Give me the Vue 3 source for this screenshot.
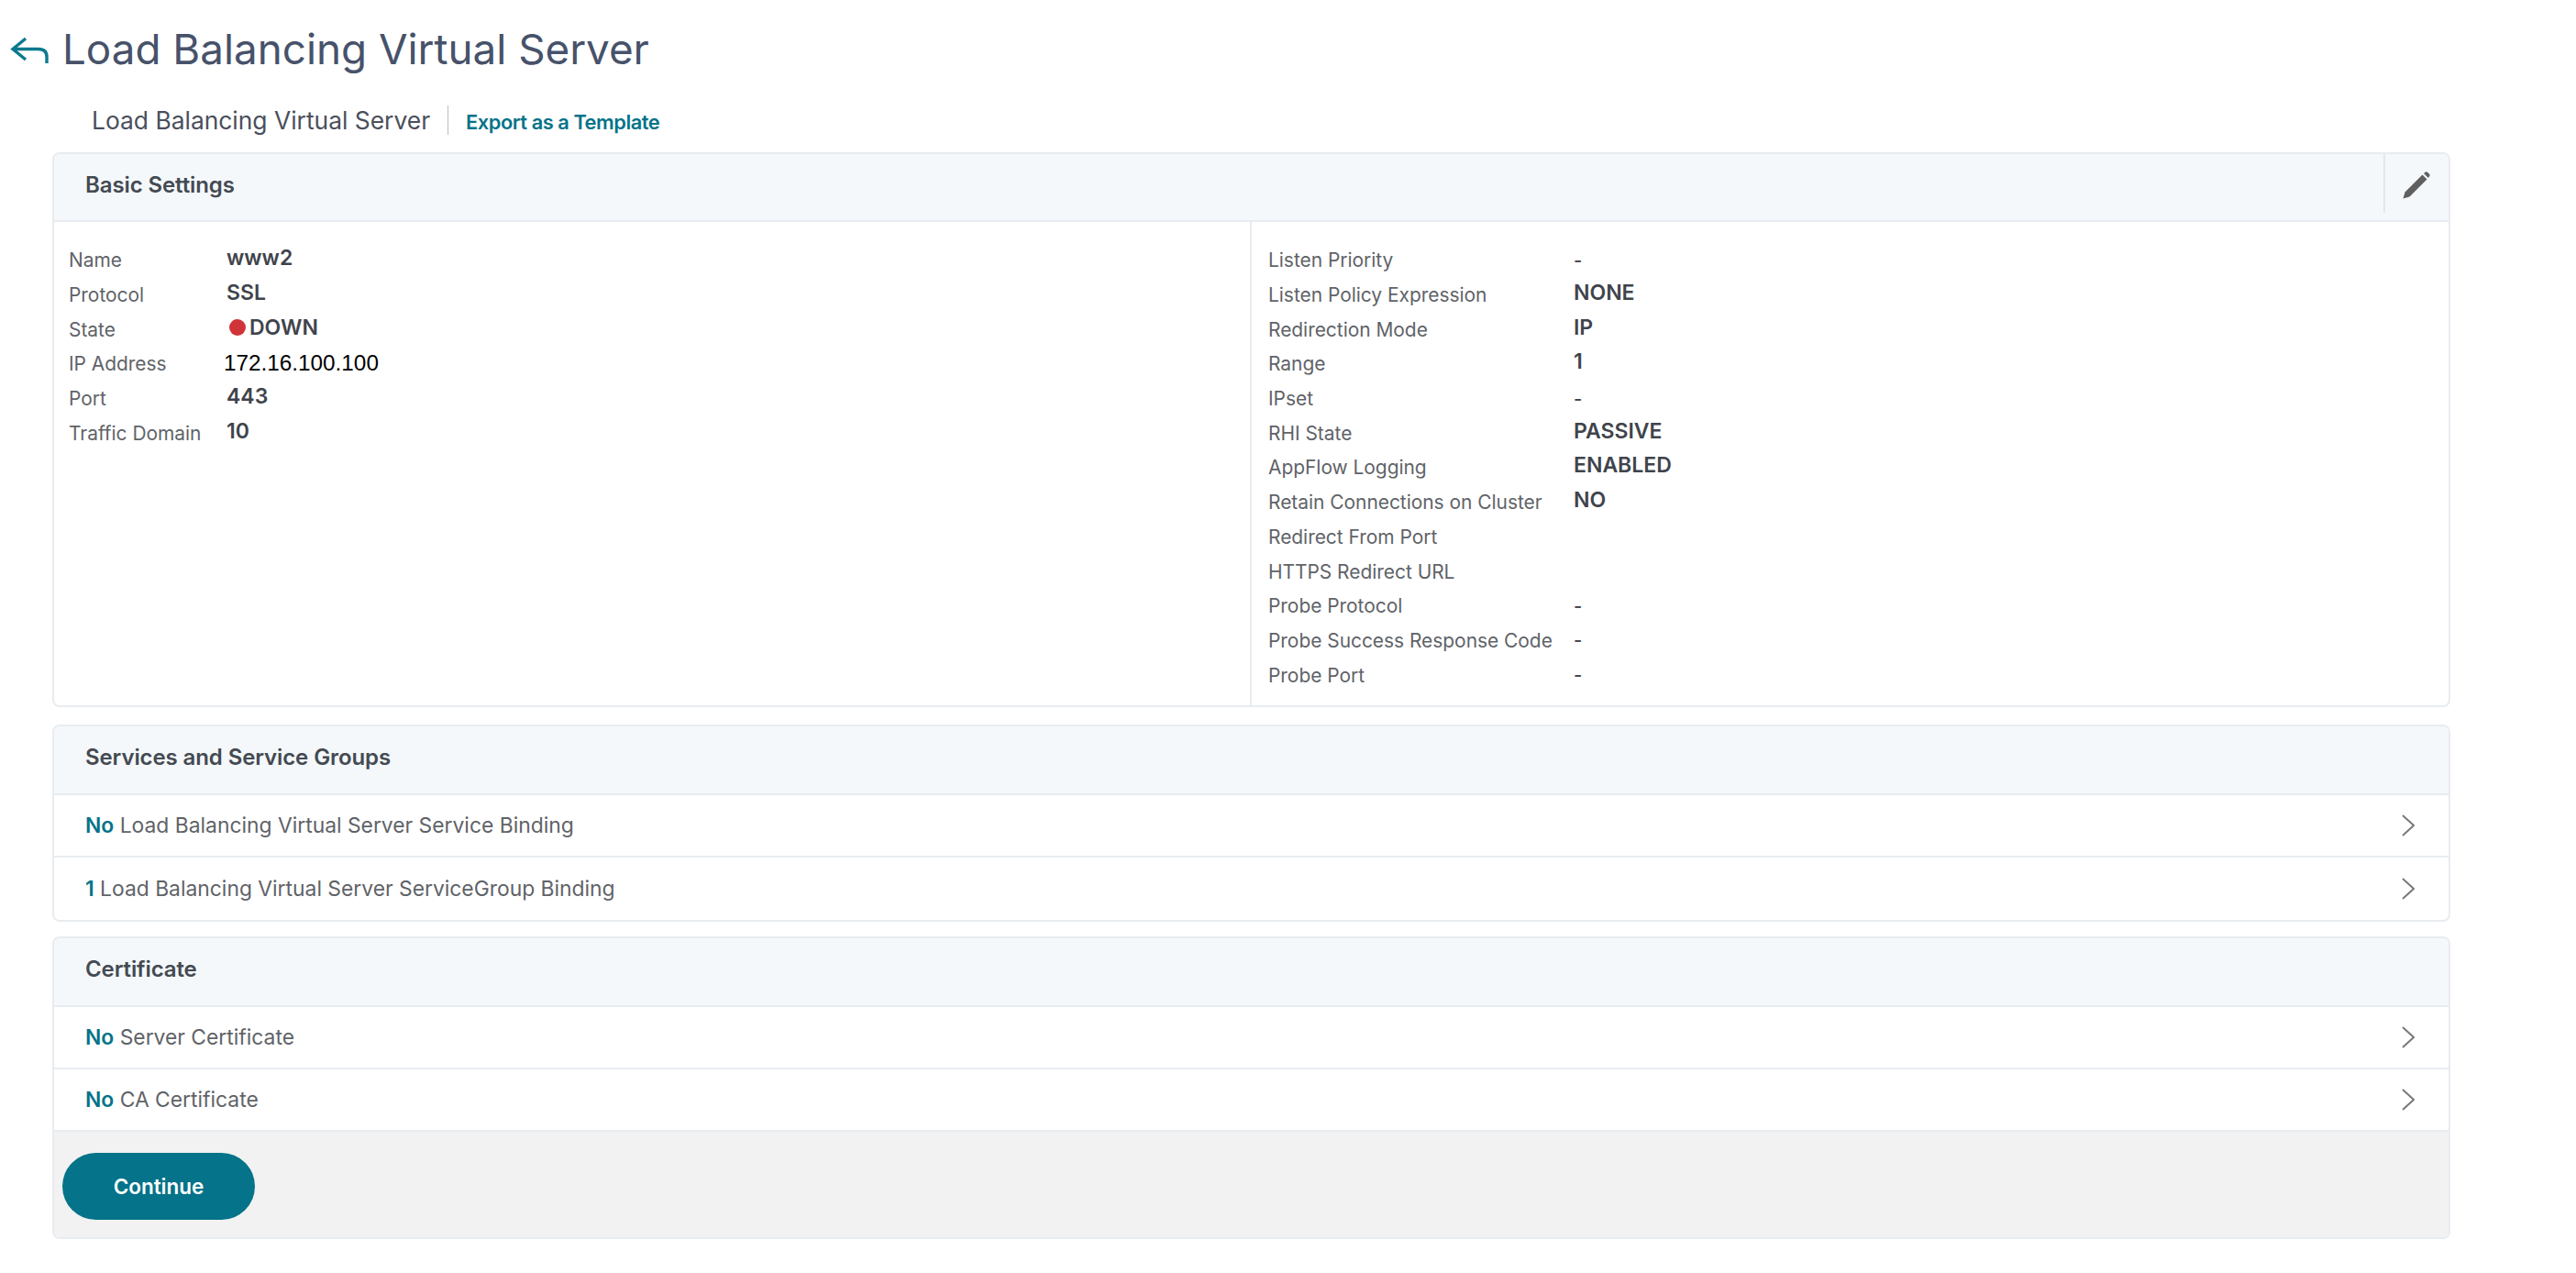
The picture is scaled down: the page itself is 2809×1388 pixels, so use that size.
<script setup>
const left = [
  { label: 'Name', value: 'www2' },
  { label: 'Protocol', value: 'SSL' },
  { label: 'State', value: 'DOWN', dot: true },
  { label: 'IP Address', value: '172.16.100.100', plain: true },
  { label: 'Port', value: '443' },
  { label: 'Traffic Domain', value: '10' }
]
const right = [
  { label: 'Listen Priority', value: '-' },
  { label: 'Listen Policy Expression', value: 'NONE' },
  { label: 'Redirection Mode', value: 'IP' },
  { label: 'Range', value: '1' },
  { label: 'IPset', value: '-' },
  { label: 'RHI State', value: 'PASSIVE' },
  { label: 'AppFlow Logging', value: 'ENABLED' },
  { label: 'Retain Connections on Cluster', value: 'NO' },
  { label: 'Redirect From Port', value: '' },
  { label: 'HTTPS Redirect URL', value: '' },
  { label: 'Probe Protocol', value: '-' },
  { label: 'Probe Success Response Code', value: '-' },
  { label: 'Probe Port', value: '-' }
]
const services = [
  { count: 'No', text: 'Load Balancing Virtual Server Service Binding' },
  { count: '1', text: 'Load Balancing Virtual Server ServiceGroup Binding' }
]
const certs = [
  { count: 'No', text: 'Server Certificate' },
  { count: 'No', text: 'CA Certificate' }
]
</script>

<template>
  <div class="page">
    <div class="title-row">
      <svg class="back" viewBox="0 0 42 30" width="42" height="30" fill="none" stroke="#0b7a8f" stroke-width="3.4">
        <path d="M17 2 L3 13.5 L17 25" />
        <path d="M3 13.5 H31 Q40 13.5 40 22 V29" />
      </svg>
      <h1 class="title">Load Balancing Virtual Server</h1>
    </div>
    <div class="crumb-row">
      <span class="crumb">Load Balancing Virtual Server</span>
      <span class="crumb-sep"></span>
      <a class="export">Export as a Template</a>
    </div>

    <section class="card card-basic">
      <header class="head head-basic">
        <span class="head-text">Basic Settings</span>
        <span class="edit">
          <svg viewBox="0 0 30 30" width="30" height="30">
            <path d="M0.5 29.5 L2.5 22.5 L21.5 3.5 L26.5 8.5 L7.5 27.5 Z" fill="#5f5f5f" />
            <path d="M23 2 L25 0.5 Q26 0 27 0.7 L29.3 3 Q30 4 29.3 5 L28 7 Z" fill="#5f5f5f" />
          </svg>
        </span>
      </header>
      <div class="basic">
        <div class="col col-left">
          <div v-for="r in left" :key="r.label" class="kv kv-left">
            <span class="key">{{ r.label }}</span>
            <span class="val" :class="{ plain: r.plain, state: r.dot }">
              <i v-if="r.dot" class="dot"></i>{{ r.value }}
            </span>
          </div>
        </div>
        <div class="col col-right">
          <div v-for="r in right" :key="r.label" class="kv kv-right">
            <span class="key">{{ r.label }}</span>
            <span class="val" :class="{ dash: r.value === '-' }">{{ r.value }}</span>
          </div>
        </div>
      </div>
    </section>

    <section class="card card-services">
      <header class="head"><span class="head-text">Services and Service Groups</span></header>
      <div v-for="r in services" :key="r.text" class="row">
        <span class="row-text"><b class="count">{{ r.count }}</b> {{ r.text }}</span>
        <svg class="chev" viewBox="0 0 14 24" width="14" height="24" fill="none" stroke="#77797c" stroke-width="2"><path d="M1 1 L13 12 L1 23" /></svg>
      </div>
    </section>

    <section class="card last">
      <header class="head"><span class="head-text">Certificate</span></header>
      <div v-for="r in certs" :key="r.text" class="row">
        <span class="row-text"><b class="count">{{ r.count }}</b> {{ r.text }}</span>
        <svg class="chev" viewBox="0 0 14 24" width="14" height="24" fill="none" stroke="#77797c" stroke-width="2"><path d="M1 1 L13 12 L1 23" /></svg>
      </div>
      <footer class="foot">
        <button class="continue">Continue</button>
      </footer>
    </section>
  </div>
</template>

<style>
html, body { margin: 0; background: #fff; }
</style>

<style scoped>
.page {
  width: 2809px;
  height: 1388px;
  box-sizing: border-box;
  overflow: hidden;
  font-family: Inter, "Liberation Sans", sans-serif;
  background: #fff;
}
.title-row {
  height: 106px;
  display: flex;
  align-items: center;
  padding-left: 11px;
  gap: 15px;
}
.back { flex: none; margin-top: 4px; }
.title {
  margin: 0;
  font-size: 45.75px;
  font-weight: 400;
  color: #47526a;
  white-space: nowrap;
}
.crumb-row {
  height: 50px;
  margin-bottom: 10px;
  padding-left: 100px;
  display: flex;
  align-items: center;
}
.crumb { font-size: 26.4px; color: #4a4f5c; white-space: nowrap; }
.crumb-sep { width: 1px; height: 32px; background: #b9bdc2; margin: 0 19px; }
.export { font-size: 21.8px; font-weight: 600; letter-spacing: -0.45px; color: #057389; white-space: nowrap; margin-top: 3px; }
.card {
  width: 2615px;
  margin-left: 57px;
  margin-bottom: 19px;
  box-sizing: border-box;
  border: 2px solid #e8ecf0;
  border-radius: 8px;
  overflow: hidden;
  background: #fff;
}
.card-services { margin-bottom: 16px; }
.head {
  height: 75px;
  box-sizing: border-box;
  background: #f4f8fb;
  border-bottom: 2px solid #e8ecf0;
  display: flex;
  align-items: center;
  padding-left: 34px;
}
.head-basic { height: 74px; }
.head-text { font-size: 24px; font-weight: 600; letter-spacing: -0.1px; color: #444a52; margin-bottom: 6px; }
.edit {
  margin-left: auto;
  align-self: flex-start;
  width: 71px;
  height: 64px;
  box-sizing: border-box;
  border-left: 2px solid #e4e8ec;
  display: flex;
  align-items: center;
  justify-content: center;
  padding: 4px 2px 0 0;
}
.basic {
  height: 527px;
  display: grid;
  grid-template-columns: 1304px 1fr;
}
.col { padding-top: 23px; box-sizing: border-box; }
.col-left { padding-left: 16px; }
.col-right { padding-left: 18px; border-left: 2px solid #e8ecf0; }
.kv {
  height: 37.7px;
  display: grid;
  align-items: center;
  white-space: nowrap;
}
.kv-left { grid-template-columns: 172px 1fr; }
.kv-right { grid-template-columns: 333px 1fr; }
.key { font-size: 20.9px; color: #5f6368; }
.val { font-size: 23px; font-weight: 600; color: #3f444c; padding-bottom: 5px; }
.val.dash { font-size: 20px; font-weight: 500; padding-bottom: 0; }
.val.plain {
  font-family: "Liberation Sans", Arial, sans-serif;
  font-size: 24.3px;
  font-weight: 400;
  color: #000;
  margin-left: -3px;
  padding-bottom: 1px;
}
.val.state { display: flex; align-items: center; }
.dot {
  width: 18px;
  height: 18px;
  margin: 0 4px 0 3px;
  border-radius: 50%;
  background: #d13438;
  flex: none;
}
.row {
  height: 68px;
  box-sizing: border-box;
  border-bottom: 2px solid #e8ecf0;
  display: flex;
  align-items: center;
  padding: 0 32px 0 34px;
  justify-content: space-between;
}
.row-text { font-size: 22.85px; color: #5f6368; white-space: nowrap; }
.count { font-weight: 600; color: #057389; }
.chev { flex: none; margin-right: 5px; }
.card:not(.last) .row:last-child { border-bottom: 0; }
.foot {
  height: 115px;
  box-sizing: border-box;
  background: #f2f2f2;
  padding: 23px 0 0 9px;
}
.continue {
  width: 210px;
  height: 73px;
  border: 0;
  border-radius: 37px;
  background: #057389;
  color: #fff;
  font-family: inherit;
  font-size: 22.5px;
  font-weight: 600;
}
</style>
